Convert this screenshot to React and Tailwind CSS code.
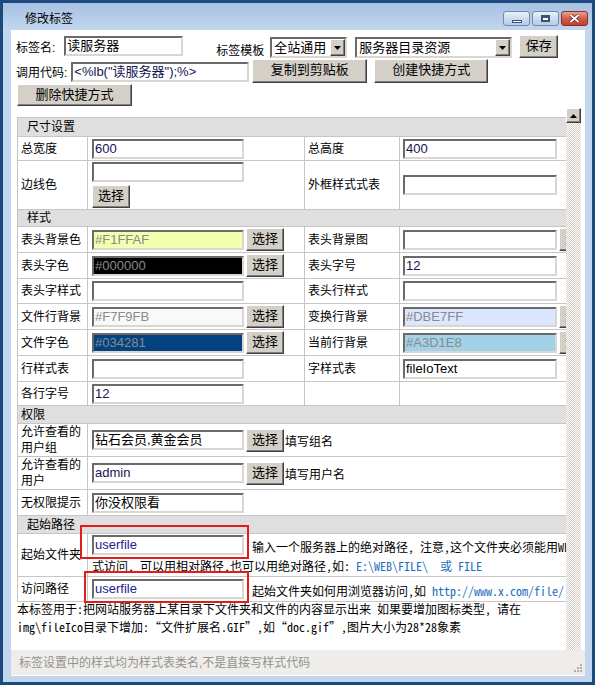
import React from 'react';

const inset =
    'border-2 border-t-[#6a6a6a] border-l-[#6a6a6a] border-b-[#dad7d0] border-r-[#dad7d0]';
const raised =
    'bg-[#d4d0c8] border border-t-white border-l-white border-b-[#404040] border-r-[#404040] shadow-[inset_-1px_-1px_0_#808080]';
const cell = 'border border-[#c6c6c6] py-0';
// half-width latin, full-width han: the hint texts use this stack
const hintFont = "font-['Noto_Sans_Mono_CJK_SC','Noto_Sans_CJK_SC',monospace]";

const Field = ({ w = 'w-[152px]', value = '', tone = 'bg-white text-[#141450]' }) => (
    <div className={`h-[20px] ${inset} ${w} ${tone} text-[13px] leading-[16px] pl-[1px] whitespace-nowrap overflow-hidden`}>
        {value}
    </div>
);

const Btn = ({ children, className = '' }) => (
    <button
        type="button"
        className={`${raised} flex items-start justify-center text-[13px] leading-[17px] pt-[1px] text-black shrink-0 ${className}`}
    >
        {children}
    </button>
);

const Pick = () => <Btn className="w-[38px] h-[23px]">选择</Btn>;

const Arrow = ({ up }) => (
    <svg width="7" height="4" viewBox="0 0 7 4">
        <path d={up ? 'M3.5 0 L7 4 L0 4 Z' : 'M0 0 L7 0 L3.5 4 Z'} fill="#000" />
    </svg>
);

const Select = ({ w, value }) => (
    <div className={`${w} h-[21px] bg-white ${inset} flex`}>
        <span className="flex-1 text-[13px] leading-[17px] pl-[2px] whitespace-nowrap overflow-hidden">{value}</span>
        <div className={`w-[15px] ${raised} flex items-center justify-center`}>
            <Arrow />
        </div>
    </div>
);

const Link = ({ children }) => <span className="text-[#1a6ebd] whitespace-pre">{children}</span>;

const Label = ({ children }) => <td className={`${cell} pl-[3px] pr-[2px] leading-[16px]`}>{children}</td>;

const Section = ({ title, indent = 'pl-[9px]', h }) => (
    <tr className={h}>
        <td colSpan={4} className={`${cell} bg-[#dfdfdf] ${indent} leading-[16px]`}>
            {title}
        </td>
    </tr>
);

// input cell in the second / fourth column, optionally followed by a 选择 button
const FieldCell = ({ value, tone, pick, wide }) => (
    <td className={`${cell} ${wide ? 'pl-[3px]' : 'pl-[4px]'}`}>
        <div className="flex items-center gap-[2px]">
            <Field w={wide ? 'w-[154px]' : 'w-[152px]'} value={value} tone={tone} />
            {pick && <Pick />}
        </div>
    </td>
);

const TitleButton = ({ children, close }) => (
    <div
        className={`w-[27px] h-[15px] rounded-[3px] border flex items-center justify-center ${
            close
                ? 'border-[#8a2f22] bg-linear-to-b from-[#e8a393] via-[#d0604a] to-[#c0402c]'
                : 'border-[#6d8ab3] bg-linear-to-b from-[#eaf1fa] via-[#cddcee] to-[#b6cbe6]'
        }`}
    >
        {children}
    </div>
);

const Grip = () => (
    <svg width="10" height="10" viewBox="0 0 10 10">
        {[
            [7, 1],
            [4, 4],
            [7, 4],
            [1, 7],
            [4, 7],
            [7, 7],
        ].map(([x, y]) => (
            <rect key={`${x}-${y}`} x={x} y={y} width="2" height="2" fill="#b3b0aa" />
        ))}
    </svg>
);

export default function App() {
    return (
        <div className="w-[595px] h-[685px] bg-[#1d4a7e] pt-[3px] px-[3px] pb-[3px] font-['Liberation_Sans','Noto_Sans_CJK_SC',sans-serif] text-black text-[12px]">
            <div className="h-full flex flex-col bg-[#c2d6ee]">
                {/* title bar */}
                <div className="h-[27px] shrink-0 bg-linear-to-b from-[#a7c1e2] to-[#c2d6ee] flex items-center pt-[4px] pl-[22px] pr-[4px]">
                    <span className="text-[12px] leading-[14px]">修改标签</span>
                    <div className="ml-auto flex items-center gap-[2px]">
                        <TitleButton>
                            <div className="w-[10px] h-[3px] bg-white border border-[#3d5272] mt-[5px]" />
                        </TitleButton>
                        <TitleButton>
                            <div className="w-[9px] h-[7px] bg-white border-2 border-[#3d5272] border-t-[3px]" />
                        </TitleButton>
                        <TitleButton close>
                            <svg width="11" height="9" viewBox="0 0 11 9">
                                <path d="M1.5 1 L9.5 8 M9.5 1 L1.5 8" stroke="#5a1a10" strokeWidth="3.4" />
                                <path d="M1.5 1 L9.5 8 M9.5 1 L1.5 8" stroke="#ffffff" strokeWidth="2" />
                            </svg>
                        </TitleButton>
                    </div>
                </div>

                <div className="flex-1 min-h-0 ml-[8px] mr-[7px] mb-[6px] bg-white flex flex-col">
                    {/* header form */}
                    <div className="h-[78px] shrink-0 pl-[5px] pt-[5px]">
                        <div className="flex items-start h-[24px]">
                            <span className="mt-[6px] leading-[14px]">标签名:</span>
                            <div className="ml-[9px] mt-[1px]">
                                <Field w="w-[119px]" value="读服务器" tone="bg-white text-black" />
                            </div>
                            <span className="ml-[33px] mt-[9px] leading-[14px]">标签模板</span>
                            <div className="ml-[6px] mt-[2px]">
                                <Select w="w-[77px]" value="全站通用" />
                            </div>
                            <div className="ml-[8px] mt-[2px]">
                                <Select w="w-[157px]" value="服务器目录资源" />
                            </div>
                            <Btn className="ml-[7px] w-[39px] h-[23px]">保存</Btn>
                        </div>
                        <div className="flex items-start h-[25px]">
                            <span className="mt-[7px] leading-[14px]">调用代码:</span>
                            <div className="ml-[4px] mt-[3px]">
                                <Field w="w-[178px]" value='<%lb("读服务器");%>' />
                            </div>
                            <Btn className="ml-[3px] w-[115px] h-[24px]">复制到剪贴板</Btn>
                            <Btn className="ml-[7px] w-[114px] h-[24px]">创建快捷方式</Btn>
                        </div>
                        <Btn className="ml-[1px] w-[115px] h-[22px]">删除快捷方式</Btn>
                    </div>

                    {/* scrolling settings panel */}
                    <div className="flex-1 min-h-0 flex pr-[4px]">
                        <div className="flex-1 min-w-0 overflow-hidden pl-[6px] pt-[9px]">
                            <table className="border-collapse table-fixed w-[587px] text-[12px]">
                                <colgroup>
                                    <col className="w-[70px]" />
                                    <col className="w-[217px]" />
                                    <col className="w-[95px]" />
                                    <col className="w-[205px]" />
                                </colgroup>
                                <tbody>
                                    <Section title="尺寸设置" h="h-[19px]" />
                                    <tr className="h-[24px]">
                                        <Label>总宽度</Label>
                                        <FieldCell value="600" />
                                        <Label>总高度</Label>
                                        <FieldCell value="400" wide />
                                    </tr>
                                    <tr className="h-[49px]">
                                        <Label>边线色</Label>
                                        <td className={`${cell} pl-[4px]`}>
                                            <div className="flex flex-col items-start gap-[3px]">
                                                <Field />
                                                <Pick />
                                            </div>
                                        </td>
                                        <Label>外框样式式表</Label>
                                        <FieldCell wide />
                                    </tr>
                                    <Section title="样式" h="h-[17px]" />
                                    <tr className="h-[26px]">
                                        <Label>表头背景色</Label>
                                        <FieldCell value="#F1FFAF" tone="bg-[#f1ffaf] text-[#8a8a8a]" pick />
                                        <Label>表头背景图</Label>
                                        <FieldCell wide pick />
                                    </tr>
                                    <tr className="h-[26px]">
                                        <Label>表头字色</Label>
                                        <FieldCell value="#000000" tone="bg-black text-[#8a8a8a]" pick />
                                        <Label>表头字号</Label>
                                        <FieldCell value="12" wide />
                                    </tr>
                                    <tr className="h-[25px]">
                                        <Label>表头字样式</Label>
                                        <FieldCell />
                                        <Label>表头行样式</Label>
                                        <FieldCell wide />
                                    </tr>
                                    <tr className="h-[26px]">
                                        <Label>文件行背景</Label>
                                        <FieldCell value="#F7F9FB" tone="bg-[#f7f9fb] text-[#8a8a8a]" pick />
                                        <Label>变换行背景</Label>
                                        <FieldCell value="#DBE7FF" tone="bg-[#dbe7ff] text-[#8a8a8a]" wide pick />
                                    </tr>
                                    <tr className="h-[26px]">
                                        <Label>文件字色</Label>
                                        <FieldCell value="#034281" tone="bg-[#034281] text-[#8a8a8a]" pick />
                                        <Label>当前行背景</Label>
                                        <FieldCell value="#A3D1E8" tone="bg-[#a3d1e8] text-[#8a8a8a]" wide pick />
                                    </tr>
                                    <tr className="h-[26px]">
                                        <Label>行样式表</Label>
                                        <FieldCell />
                                        <Label>字样式表</Label>
                                        <FieldCell value="fileIoText" tone="bg-white text-black" wide />
                                    </tr>
                                    <tr className="h-[24px]">
                                        <Label>各行字号</Label>
                                        <FieldCell value="12" />
                                        <td className={cell} />
                                        <td className={cell} />
                                    </tr>
                                    <Section title="权限" indent="pl-[3px]" h="h-[18px]" />
                                    <tr className="h-[32px]">
                                        <Label>允许查看的用户组</Label>
                                        <td colSpan={3} className={`${cell} pl-[4px]`}>
                                            <div className="flex items-center gap-[2px]">
                                                <Field value="钻石会员,黄金会员" tone="bg-white text-black" />
                                                <Pick />
                                                <span className="-ml-[1px] leading-[16px] mt-[4px]">填写组名</span>
                                            </div>
                                        </td>
                                    </tr>
                                    <tr className="h-[32px]">
                                        <Label>允许查看的用户</Label>
                                        <td colSpan={3} className={`${cell} pl-[4px]`}>
                                            <div className="flex items-center gap-[2px]">
                                                <Field value="admin" />
                                                <Pick />
                                                <span className="-ml-[1px] leading-[16px] mt-[4px]">填写用户名</span>
                                            </div>
                                        </td>
                                    </tr>
                                    <tr className="h-[26px]">
                                        <Label>无权限提示</Label>
                                        <td colSpan={3} className={`${cell} pl-[4px]`}>
                                            <Field value="你没权限看" tone="bg-white text-black" />
                                        </td>
                                    </tr>
                                    <Section title="起始路径" h="h-[18px]" />
                                    <tr className="h-[43px]">
                                        <Label>起始文件夹</Label>
                                        <td colSpan={3} className={`${cell} align-top pt-[1px] pl-[4px] whitespace-nowrap ${hintFont}`}>
                                            <div className="flex items-end">
                                                <div className="relative font-['Liberation_Sans','Noto_Sans_CJK_SC',sans-serif]">
                                                    <Field value="userfile" tone="bg-white text-[#24228c]" />
                                                    <div className="absolute -left-[12px] -right-[5px] -top-[10px] -bottom-[4px] border-2 border-[#e41b1b]" />
                                                </div>
                                                <span className="ml-[8px] leading-[16px]">
                                                    输入一个服务器上的绝对路径, 注意,这个文件夹必须能用WEB方
                                                </span>
                                            </div>
                                            <div className="leading-[18px] mt-[2px]">
                                                式访问, 可以用相对路径,也可以用绝对路径,如: <Link>E:\WEB\FILE\  或 FILE</Link>
                                            </div>
                                        </td>
                                    </tr>
                                    <tr className="h-[25px]">
                                        <Label>访问路径</Label>
                                        <td colSpan={3} className={`${cell} pl-[4px] whitespace-nowrap ${hintFont}`}>
                                            <div className="flex items-end">
                                                <div className="relative font-['Liberation_Sans','Noto_Sans_CJK_SC',sans-serif]">
                                                    <Field value="userfile" tone="bg-white text-[#24228c]" />
                                                    <div className="absolute -left-[8px] -right-[5px] -top-[8px] -bottom-[4px] border-2 border-[#e41b1b]" />
                                                </div>
                                                <span className="ml-[8px] leading-[16px]">
                                                    起始文件夹如何用浏览器访问,如 <Link>http://www.x.com/file/</Link>
                                                </span>
                                            </div>
                                        </td>
                                    </tr>
                                </tbody>
                            </table>
                            <div className={`leading-[18px] whitespace-nowrap -mt-[2px] ${hintFont}`}>
                                <div>本标签用于:把网站服务器上某目录下文件夹和文件的内容显示出来 如果要增加图标类型,  请在</div>
                                <div>img\fileIco目录下增加:“文件扩展名.GIF”,如“doc.gif”,图片大小为28*28象素</div>
                            </div>
                        </div>

                        {/* vertical scrollbar */}
                        <div className="w-[15px] shrink-0 bg-[image:repeating-conic-gradient(#d4d0c8_0%_25%,#ffffff_0%_50%)] bg-[length:2px_2px]">
                            <div className={`h-[15px] ${raised} flex items-center justify-center`}>
                                <Arrow up />
                            </div>
                        </div>
                    </div>

                    {/* status bar */}
                    <div className="h-[25px] shrink-0 mb-[1px] bg-[#efedea] flex items-center pl-[8px] pr-[2px]">
                        <span className="text-[#929292] leading-[14px] mt-[1px]">标签设置中的样式均为样式表类名,不是直接写样式代码</span>
                        <div className="ml-auto self-end mb-[2px]">
                            <Grip />
                        </div>
                    </div>
                </div>
            </div>
        </div>
    );
}
